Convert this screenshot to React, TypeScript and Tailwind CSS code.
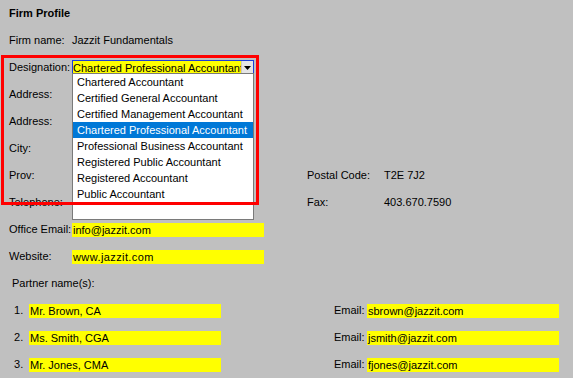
import React from 'react';

const options = [
  'Chartered Accountant',
  'Certified General Accountant',
  'Certified Management Accountant',
  'Chartered Professional Accountant',
  'Professional Business Accountant',
  'Registered Public Accountant',
  'Registered Accountant',
  'Public Accountant',
];

const partners = [
  { name: 'Mr. Brown, CA', email: 'sbrown@jazzit.com' },
  { name: 'Ms. Smith, CGA', email: 'jsmith@jazzit.com' },
  { name: 'Mr. Jones, CMA', email: 'fjones@jazzit.com' },
];

const Row: React.FC<{ children?: React.ReactNode }> = ({ children }) => (
  <div className="h-[27px] flex items-center">{children}</div>
);

const Field: React.FC<{ value: string; className?: string }> = ({ value, className }) => (
  <div className={`h-[14px] bg-[#ffff00] flex items-center leading-[14px] pl-px ${className ?? ''}`}>
    {value}
  </div>
);

export default function App() {
  const selected = 'Chartered Professional Accountant';

  return (
    <div
      className="relative w-[573px] h-[378px] overflow-hidden bg-[#c0c0c0] text-[11px] text-black"
      style={{ fontFamily: '"Liberation Sans", Arial, sans-serif' }}
    >
      <div className="h-[27px] pl-[9px] pt-[6px] font-bold leading-[14px]">Firm Profile</div>

      <div className="flex">
        {/* left column */}
        <div className="w-[298px] pl-[9px]">
          <Row>
            <span className="w-[63px]">Firm name:</span>
            <span>Jazzit Fundamentals</span>
          </Row>
          <Row>
            <span className="w-[63px]">Designation:</span>
            <div className="flex h-[16px] w-[182px] border border-[#1c3fd8] bg-[#ffff00]">
              <div className="flex-1 overflow-hidden whitespace-nowrap leading-[14px]">{selected}</div>
              <div className="w-[12px] bg-[#e5e5e5] border-l border-[#c8c8c8] flex items-center justify-center">
                <svg width="7" height="4" viewBox="0 0 7 4">
                  <path d="M0 0h7L3.5 4z" fill="#000" />
                </svg>
              </div>
            </div>
          </Row>
          <Row><span>Address:</span></Row>
          <Row><span>Address:</span></Row>
          <Row><span>City:</span></Row>
          <Row><span>Prov:</span></Row>
          <Row><span>Telephone:</span></Row>
          <Row>
            <span className="w-[63px] whitespace-nowrap">Office Email:</span>
            <Field value="info@jazzit.com" className="w-[192px]" />
          </Row>
          <Row>
            <span className="w-[63px]">Website:</span>
            <Field value="www.jazzit.com" className="w-[192px] tracking-[0.4px]" />
          </Row>
        </div>

        {/* right column */}
        <div className="pl-[9px]">
          <Row />
          <Row />
          <Row />
          <Row />
          <Row />
          <Row>
            <span className="w-[77px]">Postal Code:</span>
            <span>T2E 7J2</span>
          </Row>
          <Row>
            <span className="w-[77px]">Fax:</span>
            <span>403.670.7590</span>
          </Row>
        </div>
      </div>

      <div className="pl-[12px]">
        <Row><span>Partner name(s):</span></Row>
      </div>
      {partners.map((p, i) => (
        <div key={p.email} className="h-[27px] flex items-center">
          <span className="w-[29px] pl-[14px]">{i + 1}.</span>
          <Field value={p.name} className="w-[192px]" />
          <span className="ml-[113px] w-[33px]">Email:</span>
          <Field value={p.email} className="w-[192px]" />
        </div>
      ))}

      {/* open dropdown list */}
      <div className="absolute left-[72px] top-[73px] w-[182px] h-[147px] bg-white border border-[#7a7a7a]">
        {options.map((o) => (
          <div
            key={o}
            className={`h-[16px] leading-[16px] pl-[4px] whitespace-nowrap ${
              o === selected ? 'bg-[#0078d7] text-white' : ''
            }`}
          >
            {o}
          </div>
        ))}
      </div>

      {/* highlight frame */}
      <div className="absolute left-[1px] top-[55px] w-[258px] h-[150px] border-[3px] border-[#ff0000] pointer-events-none" />
    </div>
  );
}
